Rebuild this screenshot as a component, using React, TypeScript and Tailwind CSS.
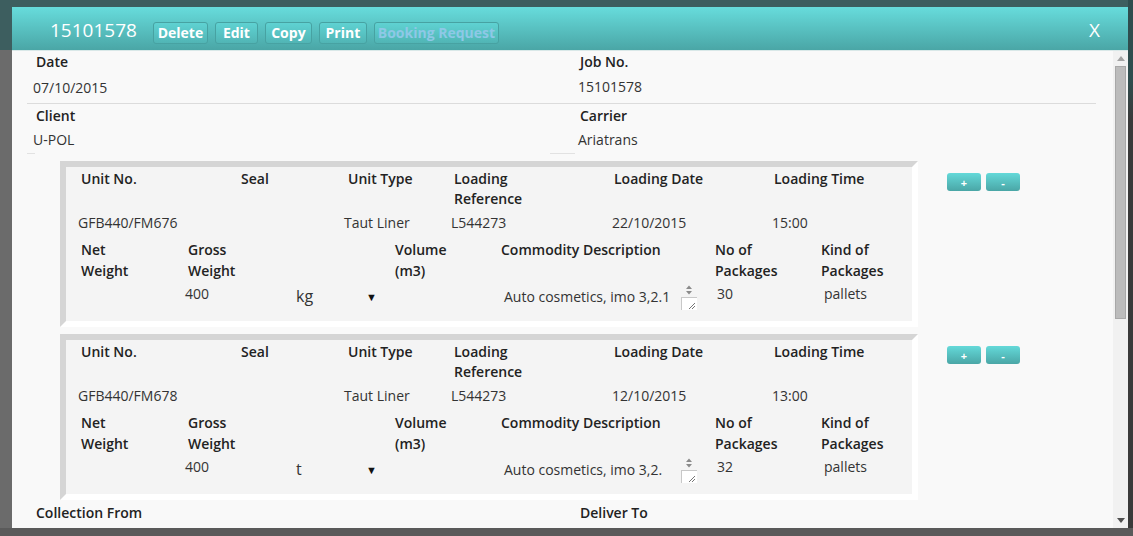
const font = "font-['Open_Sans',sans-serif]";

type Unit = {
  unitNo: string;
  type: string;
  ref: string;
  date: string;
  time: string;
  gross: string;
  uom: string;
  desc: string;
  pkgs: string;
  kind: string;
};

const units: Unit[] = [
  { unitNo: "GFB440/FM676", type: "Taut Liner", ref: "L544273", date: "22/10/2015", time: "15:00", gross: "400", uom: "kg", desc: "Auto cosmetics, imo 3,2.1", pkgs: "30", kind: "pallets" },
  { unitNo: "GFB440/FM678", type: "Taut Liner", ref: "L544273", date: "12/10/2015", time: "13:00", gross: "400", uom: "t", desc: "Auto cosmetics, imo 3,2.", pkgs: "32", kind: "pallets" },
];

function HeadButton({ label, w, disabled }: { label: string; w: string; disabled?: boolean }) {
  return (
    <div
      className={`${w} h-[22px] rounded-[3px] border border-[#47a2a2] bg-[linear-gradient(to_bottom,#5fd2d2,#51b5b5)] flex items-center justify-center text-[14px] font-bold leading-none ${disabled ? "text-[#8ec8e6]" : "text-white"}`}
    >
      {label}
    </div>
  );
}

function SmallButton({ label }: { label: string }) {
  return (
    <div className="w-[34px] h-[18px] rounded-[3px] bg-[linear-gradient(to_bottom,#64d9d9,#4aa6a6)] flex items-center justify-center text-white text-[11px] font-bold leading-none">
      {label}
    </div>
  );
}

function Spinner() {
  return (
    <div className="w-[16px] h-[26px] flex flex-col">
      <svg width="16" height="13" viewBox="0 0 16 13">
        <path d="M5 5 L8 1.5 L11 5 Z" fill="#8a8a8a" />
        <path d="M5 7 L8 10.5 L11 7 Z" fill="#8a8a8a" />
      </svg>
      <svg width="16" height="13" viewBox="0 0 16 13">
        <rect x="0.5" y="0.5" width="16" height="13" fill="#fff" stroke="#c8c8c8" />
        <path d="M8 12 L14 6 M11 12 L14 9" stroke="#777" strokeWidth="1" />
      </svg>
    </div>
  );
}

function UnitBox({ u }: { u: Unit }) {
  const lab = "font-semibold text-[14px] text-[#222]";
  return (
    <div className="flex items-start ml-[33px]">
      <div className="w-[858px] border-[6px] border-t-[#d5d5d5] border-l-[#d5d5d5] border-r-white border-b-white bg-[#f4f4f4] pt-[2px] pb-[11px]">
        <div className={`flex pl-[15px] leading-[20px] ${lab}`}>
          <div className="w-[160px]">Unit No.</div>
          <div className="w-[107px]">Seal</div>
          <div className="w-[106px]">Unit Type</div>
          <div className="w-[160px]">Loading<br />Reference</div>
          <div className="w-[160px]">Loading Date</div>
          <div>Loading Time</div>
        </div>
        <div className="flex pl-[12px] mt-[4px] leading-[20px] text-[14px] text-[#333]">
          <div className="w-[266px]">{u.unitNo}</div>
          <div className="w-[107px]">{u.type}</div>
          <div className="w-[161px]">{u.ref}</div>
          <div className="w-[160px]">{u.date}</div>
          <div>{u.time}</div>
        </div>
        <div className={`flex pl-[15px] mt-[6px] leading-[21px] ${lab}`}>
          <div className="w-[107px]">Net<br />Weight</div>
          <div className="w-[207px]">Gross<br />Weight</div>
          <div className="w-[106px]">Volume<br />(m3)</div>
          <div className="w-[214px]">Commodity Description</div>
          <div className="w-[106px]">No of<br />Packages</div>
          <div>Kind of<br />Packages</div>
        </div>
        <div className="flex items-start pl-[119px] mt-[3px] text-[14px] text-[#333] leading-[20px]">
          <div className="w-[111px]">{u.gross}</div>
          <div className="w-[70px] text-[16px] mt-[2px]">{u.uom}</div>
          <div className="w-[138px] text-[11px] mt-[3px] text-[#111]">▼</div>
          <div className="w-[177px] mt-[3px]">{u.desc}</div>
          <Spinner />
          <div className="w-[107px] ml-[20px]">{u.pkgs}</div>
          <div>{u.kind}</div>
        </div>
      </div>
      <div className="ml-[29px] mt-[12px] flex gap-[5px]">
        <SmallButton label="+" />
        <SmallButton label="-" />
      </div>
    </div>
  );
}

export default function App() {
  const lab = "font-semibold text-[14px] leading-[20px] text-[#222]";
  const val = "text-[14px] leading-[20px] text-[#333]";
  return (
    <div className={`w-[1133px] h-[536px] overflow-hidden flex flex-col bg-[#5a5a5a] ${font}`}>
      <div className="flex h-[528px]">
        {/* backdrop left */}
        <div className="w-[12px] bg-[linear-gradient(to_bottom,#3d5e5f_0px,#3d5e5f_50px,#6b6b6b_50px)]" />
        <div className="w-[1116px] flex flex-col">
          <div className="h-[7px] shrink-0 bg-[#3d5e5f]" />
          {/* modal */}
          <div className="flex-1 flex flex-col">
            <div className="h-[44px] shrink-0 bg-[linear-gradient(to_bottom,#67dcdc,#4aa6a6)] flex items-center pl-[38px] pr-[28px] border-b border-[#d9e8e8]">
              <div className="text-white text-[19px] leading-none mt-[4px]">15101578</div>
              <div className="flex gap-[7px] ml-[16px] mt-[8px]">
                <HeadButton label="Delete" w="w-[55px]" />
                <HeadButton label="Edit" w="w-[43px]" />
                <HeadButton label="Copy" w="w-[47px]" />
                <HeadButton label="Print" w="w-[48px]" />
                <HeadButton label="Booking Request" w="w-[125px]" disabled />
              </div>
              <div className="ml-auto text-white text-[19px] leading-none mt-[4px]">X</div>
            </div>
            <div className="flex-1 flex bg-[#f9f9f9] overflow-hidden">
              <div className="flex-1 pl-[15px] pr-[17px]">
                <div className="flex pt-[1px]">
                  <div className="w-[550px]">
                    <div className={`${lab} pl-[9px]`}>Date</div>
                    <div className={`${val} pl-[6px] mt-[6px]`}>07/10/2015</div>
                  </div>
                  <div>
                    <div className={`${lab} pl-[3px]`}>Job No.</div>
                    <div className={`${val} pl-[1px] mt-[5px]`}>15101578</div>
                  </div>
                </div>
                <div className="h-px bg-[#dcdcdc] mt-[5px]" />
                <div className="flex mt-[2px]">
                  <div className="w-[550px]">
                    <div className={`${lab} pl-[9px]`}>Client</div>
                    <div className={`${val} pl-[6px] mt-[4px]`}>U-POL</div>
                  </div>
                  <div>
                    <div className={`${lab} pl-[3px]`}>Carrier</div>
                    <div className={`${val} pl-[1px] mt-[4px]`}>Ariatrans</div>
                  </div>
                </div>
                <div className="flex mt-[3px] h-px">
                  <div className="w-[8px] bg-[#e2e2e2]" />
                  <div className="w-[25px] ml-[515px] bg-[#e2e2e2]" />
                </div>
                <div className="mt-[7px] flex flex-col gap-[7px]">
                  {units.map((u) => (
                    <UnitBox key={u.unitNo} u={u} />
                  ))}
                </div>
                <div className="flex mt-[3px]">
                  <div className={`${lab} w-[550px] pl-[9px]`}>Collection From</div>
                  <div className={`${lab} pl-[3px]`}>Deliver To</div>
                </div>
              </div>
              {/* scrollbar */}
              <div className="w-[15px] bg-[#f1f1f1] flex flex-col items-center">
                <div className="h-[15px] flex items-center justify-center">
                  <svg width="8" height="5" viewBox="0 0 8 5"><path d="M0 5 L4 0 L8 5 Z" fill="#a3a3a3" /></svg>
                </div>
                <div className="w-[11px] h-[253px] bg-[#bcbcbc] border border-[#a8a8a8]" />
                <div className="flex-1" />
                <div className="h-[15px] flex items-center justify-center">
                  <svg width="8" height="5" viewBox="0 0 8 5"><path d="M0 0 L4 5 L8 0 Z" fill="#505050" /></svg>
                </div>
              </div>
            </div>
          </div>
        </div>
        {/* backdrop right */}
        <div className="flex-1 bg-[linear-gradient(to_bottom,#2f4d4e_0px,#2f4d4e_80px,#3a3a3a_120px)]" />
      </div>
    </div>
  );
}
